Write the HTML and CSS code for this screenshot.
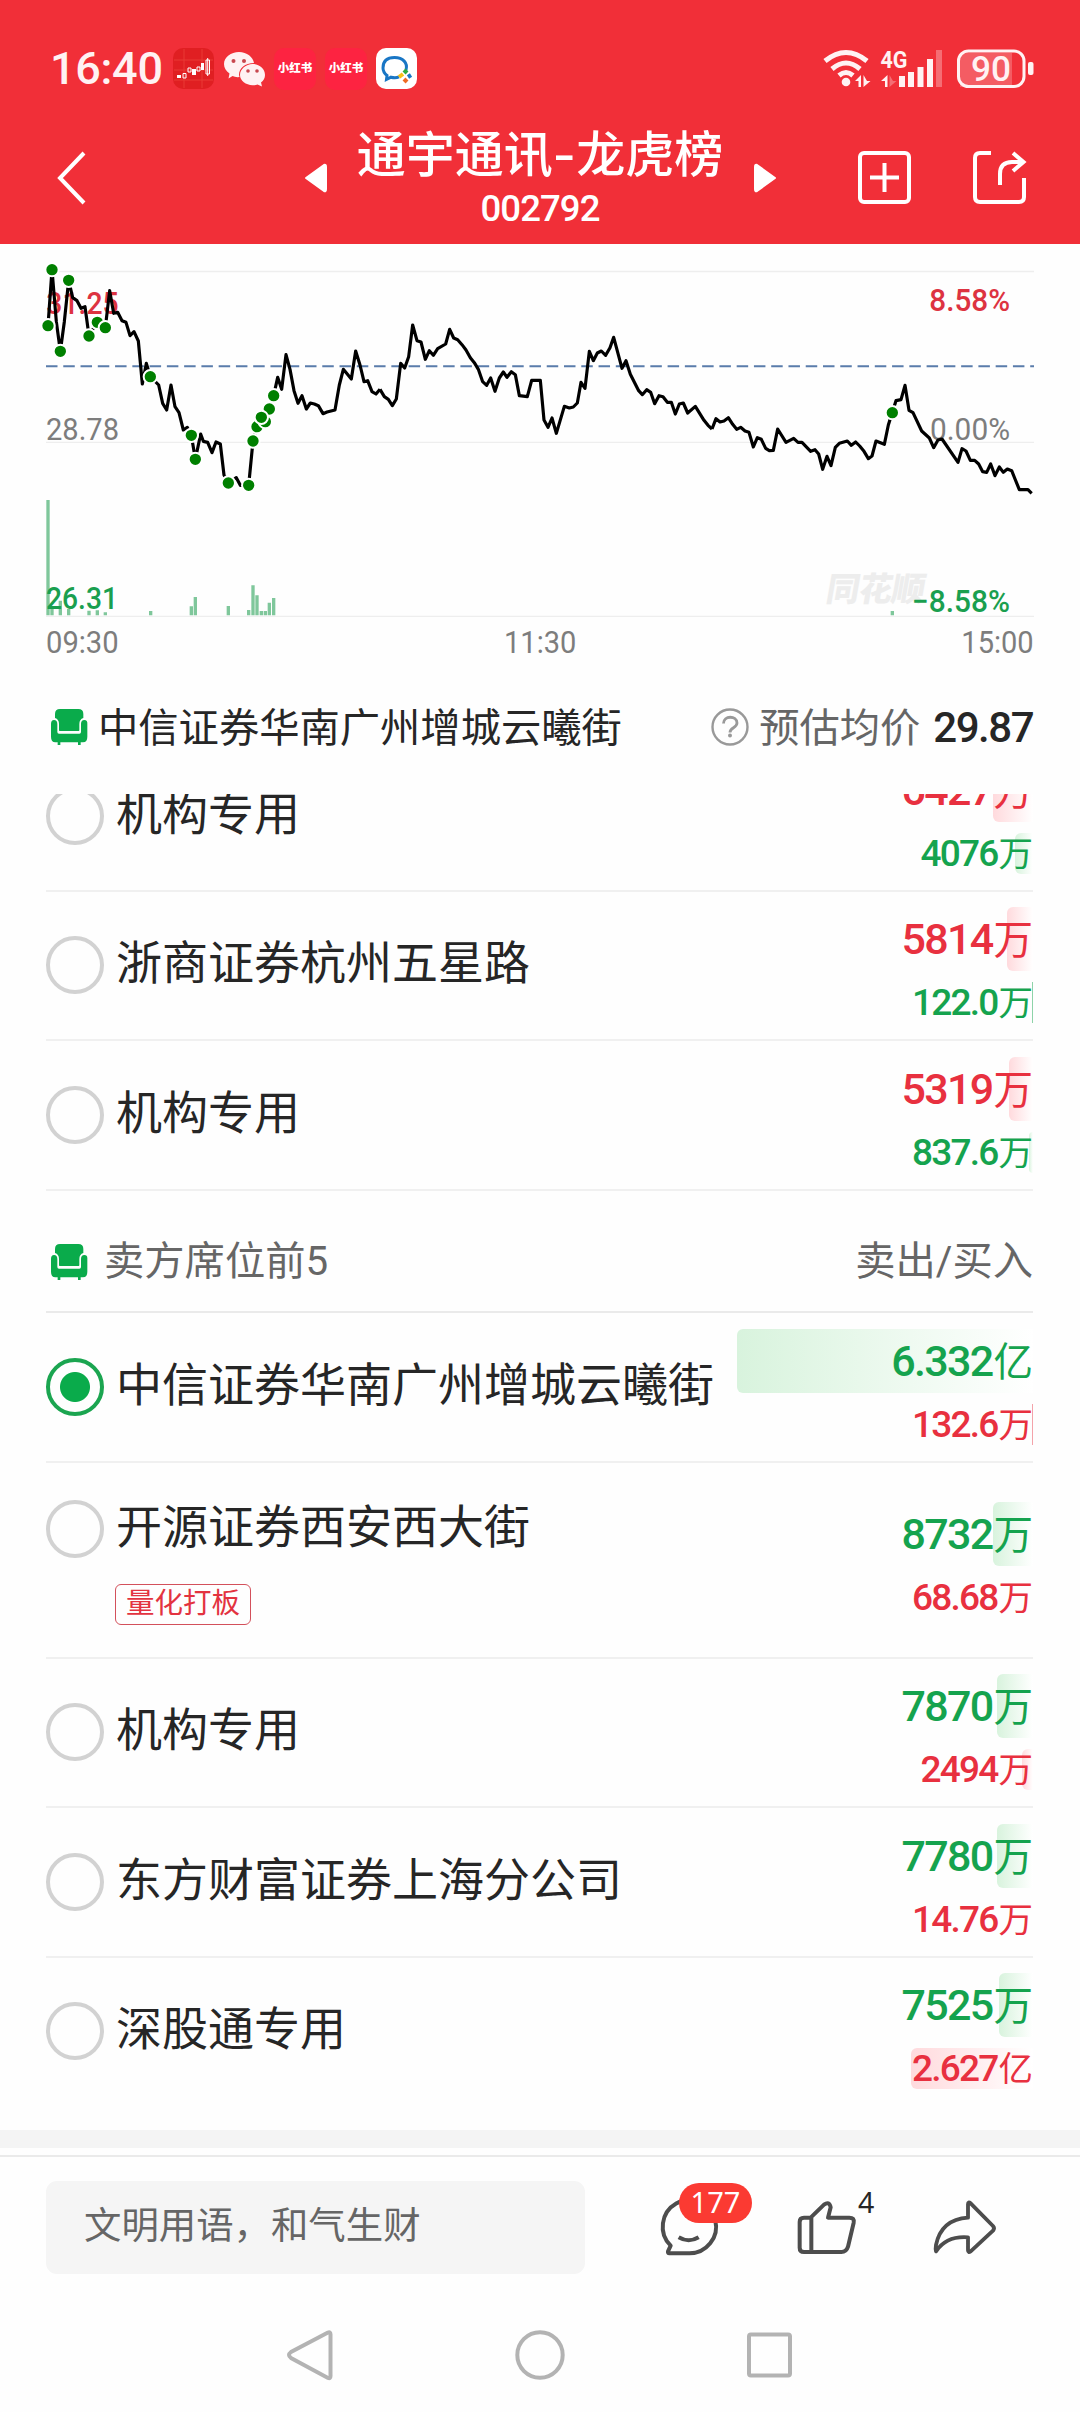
FILE: index.html
```html
<!DOCTYPE html>
<html lang="zh-CN">
<head>
<meta charset="utf-8">
<title>通宇通讯-龙虎榜</title>
<link rel="stylesheet" href="styles.css">
</head>
<body>
<svg class="defs" width="0" height="0">
  <symbol id="sofa" viewBox="60 54 114 114">
    <path fill="#0aab4b" d="M90 57h55q15 0 15 15v12q-12 4-12 18v19q0 2-2 2H89q-2 0-2-2v-19q0-14-12-18V72q0-15 15-15z"/>
    <path fill="#0aab4b" d="M72 90q10 0 10 12v24q0 5 5 5h61q5 0 5-5v-24q0-12 10-12t9 12v38q0 17-13 17h-7v8h-8v-8H91v8h-8v-8h-7q-13 0-13-17v-38q0-12 9-12z"/>
  </symbol>
</svg>

<header class="header">
  <div class="status">
    <span class="clock">16:40</span>
    <svg class="app" viewBox="0 0 41 41"><rect width="41" height="41" rx="10" fill="#e01f22"/><path d="M11 1v39M29 1v39M1 12h39M1 22h39M1 32h39" stroke="#e93a35" stroke-width="1"/><path d="M4 27h4v3H4zM19 21h4v6h-4zM28 15h3v7h-3z" fill="#fff"/><path d="M10 25.500h3v4.500h-3zM15 20h3v4h-3zM24 19h3v4h-3zM33 12h3.500v14H33zM34.700 10v18" fill="none" stroke="#fff"/></svg>
    <svg class="wechat" viewBox="0 0 41 35"><path fill="#fff2f3" d="M15 1c8 0 14 5 15 11-9 0-15 5-15 12l.5 2q-4 .5-7-1l-4 2.500 1-5C2 20 0 17 0 13 0 6 7 1 15 1z"/><path fill="#fff2f3" d="M28.500 13C35 13 41 17.500 41 24c0 3-1.500 5.500-4 7.500l1 4-4.500-2q-2 .7-5 .7C22 34 16 30 16 24s6-11 12.500-11z"/><g fill="#c8484f"><circle cx="9.500" cy="10" r="2"/><circle cx="20" cy="10" r="2"/><circle cx="24" cy="20" r="1.800"/><circle cx="33" cy="20" r="1.800"/></g></svg>
    <span class="xhs">小红书</span>
    <span class="xhs">小红书</span>
    <svg class="app wecom" viewBox="0 0 41 41"><rect width="41" height="41" rx="10" fill="#fff"/><path d="M30 22c2-7-3-12.500-11.500-12.500S7 14 7 20c0 3 1.500 5.500 4 7.500l-.5 4 4.500-2.300c3 .8 6 .6 8-.3" fill="none" stroke="#1976c5" stroke-width="3"/><path d="M28 22l3 3" stroke="#2cac3f" stroke-width="4"/><path d="M35 27l-3 2" stroke="#1976c5" stroke-width="4"/><path d="M31 34l-3-3" stroke="#ef6a22" stroke-width="4"/><path d="M23 29l4-3" stroke="#f5c018" stroke-width="4"/></svg>
    <svg class="signals" viewBox="823 48 211 40">
      <g fill="none" stroke="#fff2f3" stroke-width="5">
        <path d="M825 60q21-17 42 0M832 68q14-12 28 0M839 74.500q7-6 14 0"/>
      </g>
      <g fill="#fff2f3"><circle cx="846" cy="81" r="4.300"/><path d="M861 74v12h-2.500v-6H855zM863.500 74v12l7-6h-3.500z"/><path d="M887.500 74v12H885v-6h-4zM899 75h6v11h-6zM908 71h6v15h-6zM917.500 66h6v20h-6zM927 58h6v28h-6z"/></g>
      <path fill="#fff" fill-opacity=".3" d="M936 49h6v37h-6zM889.500 74v12l7-6h-3.500z"/>
      <text x="880.500" y="66.500" class="net" textLength="27" lengthAdjust="spacingAndGlyphs">4G</text>
      <path fill="#fff" fill-opacity=".22" d="M960 52h52v34h-52z"/>
      <rect x="958.500" y="50" width="65.500" height="35.500" rx="10" fill="none" stroke="#fff2f3" stroke-width="3"/>
      <rect x="1028" y="61" width="5.500" height="13" rx="2" fill="#fff2f3"/>
      <text x="971" y="80" class="charge" textLength="40" lengthAdjust="spacingAndGlyphs">90</text>
    </svg>
  </div>
  <nav class="navbar">
    <svg class="back" viewBox="0 0 28 54"><path d="M26 2L2 27l24 25" fill="none" stroke="#fff" stroke-width="4"/></svg>
    <svg class="tri prev" viewBox="0 0 24 30"><path d="M20 2L2 15l18 13q2 1 2-2V4q0-3-2-2z" fill="#fff" stroke="#fff" stroke-width="2" stroke-linejoin="round"/></svg>
    <div class="title"><h1>通宇通讯<span class="dash">-</span>龙虎榜</h1><p>002792</p></div>
    <svg class="tri next" viewBox="0 0 24 30"><path d="M4 2l18 13L4 28q-2 1-2-2V4q0-3 2-2z" fill="#fff" stroke="#fff" stroke-width="2" stroke-linejoin="round"/></svg>
    <svg class="tool add" viewBox="0 0 53 53"><rect x="2" y="2" width="49" height="49" rx="4" fill="none" stroke="#fff" stroke-width="4"/><path d="M12 26.500h29M26.500 12v29" stroke="#fff" stroke-width="4"/></svg>
    <svg class="tool share" viewBox="0 0 53 53"><path d="M18 2H7Q2 2 2 7v39q0 5 5 5h39q5 0 5-5V27M27 34V23Q27 11 39 11h11M40 2l10.500 9L40 20" fill="none" stroke="#fff" stroke-width="4"/></svg>
  </nav>
</header>

<svg class="chart" viewBox="0 -18 3240 1272">
  <path d="M138 64.500H3102M138 577H3102M138 1099H3102" stroke="#eee" stroke-width="4"/>
  <text x="2475" y="1053" class="watermark" transform="translate(185 0) skewX(-10)" textLength="296">同花顺</text>
  <path d="M138 348.500H3102" stroke="#5a7cab" stroke-width="6" stroke-dasharray="34.500 17.300"/>
  <path fill="none" stroke="#7fc79b" stroke-width="10" d="M144 1096V750M156 1096v-21M181 1096v-44M206 1096v-19M267 1096v-14M292 1096v-15M316 1096v-9M452 1096v-13M574 1096v-27M586 1096v-55M685 1096v-28M746 1096v-16M759 1096v-90M771 1096v-60M784 1096v-13M796 1096v-13M808 1096v-38M821 1096v-52M2677 1096v-13"/>
  <g class="axis">
    <text x="139" y="191" class="up" textLength="217" lengthAdjust="spacingAndGlyphs">31.25</text>
    <text x="138" y="569" textLength="219" lengthAdjust="spacingAndGlyphs">28.78</text>
    <text x="138" y="1076" class="down" textLength="216" lengthAdjust="spacingAndGlyphs">26.31</text>
    <text x="2788" y="182" class="up" textLength="242" lengthAdjust="spacingAndGlyphs">8.58%</text>
    <text x="2790" y="569" textLength="240" lengthAdjust="spacingAndGlyphs">0.00%</text>
    <text x="2736" y="1085" class="down" textLength="294" lengthAdjust="spacingAndGlyphs">−8.58%</text>
    <text x="138" y="1208" textLength="218" lengthAdjust="spacingAndGlyphs">09:30</text>
    <text x="1512" y="1208" textLength="217" lengthAdjust="spacingAndGlyphs">11:30</text>
    <text x="2884" y="1208" textLength="217" lengthAdjust="spacingAndGlyphs">15:00</text>
  </g>
  <g fill="none" stroke="#000" stroke-width="9.500" stroke-linejoin="round">
    <polyline transform="translate(90 0)" points="54,227 66,59 79,215 91,304 103,215 116,91 128,143 141,152 153,175 165,170 177,258 202,215 226,233 239,122 251,190 263,187 276,212 288,217 300,257 312,245 325,273 337,402 349,340 361,380 386,405 398,460 410,480 423,405 435,470 447,488 460,540 472,532 484,556 496,628 512,552 520,574 533,577 546,608 558,576 571,582 582,675 595,699 619,683 631,706 656,706 669,573 680,530 694,503 706,515 718,477 731,437 743,382 755,418 768,314 780,358 792,422 804,460 816,437 829,477 841,459 853,462 865,467 879,491 891,486 915,480 928,405 940,358 964,387 977,303 990,345 1002,395 1013,392 1026,425 1038,432 1050,418"/>
    <polyline transform="translate(1110 0)" points="30,418 43,440 55,448 67,467 79,447 92,340 104,354 116,320 128,225 141,272 153,276 166,328 178,302 190,316 203,296 227,282 239,238 251,264 263,269 276,284 288,300 301,323 313,338 325,358 338,395 350,406 362,384 375,424 388,384 400,366 411,382 424,365 436,374 448,437 472,440 485,391 511,391 522,510 534,532 546,504 559,550 583,469 598,474 610,471 622,459 633,397 645,415 658,304 670,332 682,309 694,303 707,316 720,293 731,262 756,355 768,332 781,373 806,422 817,434 830,419 842,427 854,461 867,437 879,440 892,457 904,457 916,492 928,462 940,459 953,489 976,469 1002,511 1014,526 1026,537"/>
    <polyline transform="translate(2130 0)" points="6,537 18,506 30,516 42,513 55,503 68,523 80,538 92,532 105,543 117,547 130,591 142,563 154,568 167,595 178,602 190,601 203,537 228,577 251,565 264,577 276,577 302,604 315,599 326,612 338,658 351,619 363,647 376,592 388,580 412,573 424,586 437,576 449,588 462,604 475,626 486,618 498,573 523,583 535,525 547,487 558,452 573,449 585,406 597,481 609,488 635,543 658,564 671,593 684,570 696,567 744,637 756,596 768,603 781,631 794,631 806,642 818,665 830,667 842,642 855,677 868,651 880,667 892,657 905,662 928,719 954,719 965,730"/>
  </g>
  <g class="dots">
    <circle cx="144" cy="227" r="20"/><circle cx="156" cy="59" r="20"/><circle cx="181" cy="304" r="20"/><circle cx="206" cy="91" r="20"/><circle cx="292" cy="217" r="20"/><circle cx="267" cy="258" r="20"/><circle cx="316" cy="233" r="20"/><circle cx="451" cy="380" r="20"/><circle cx="574" cy="556" r="20"/><circle cx="586" cy="628" r="20"/><circle cx="685" cy="699" r="20"/><circle cx="746" cy="706" r="20"/><circle cx="771" cy="530" r="20"/><circle cx="759" cy="573" r="20"/><circle cx="796" cy="515" r="20"/><circle cx="808" cy="477" r="20"/><circle cx="784" cy="502" r="20"/><circle cx="821" cy="437" r="20"/><circle cx="2677" cy="488" r="20"/>
  </g>
</svg>

<section class="summary">
  <svg class="sofa"><use href="#sofa"/></svg>
  <span class="seat">中信证券华南广州增城云曦街</span>
  <svg class="help" viewBox="0 0 38 38"><g fill="none" stroke="#999" stroke-width="2.400"><circle cx="19" cy="19" r="17.500"/><path d="M12.500 15.500c0-8.500 13.500-8 13.500-.5 0 5-7 4.500-7 9.500" stroke-width="2.800"/></g><circle cx="19" cy="27.500" r="2" fill="#999"/></svg>
  <span class="label">预估均价</span>
  <b class="avg">29.87</b>
</section>

<main class="list">
  <div class="row">
    <i class="radio"></i><div class="name">机构专用</div>
    <div class="vals"><div class="big red"><i class="fill" style="width:40px"></i><span>6427<em>万</em></span></div><div class="small green"><i class="fill" style="width:18px"></i><span>4076<em>万</em></span></div></div>
  </div>
  <div class="row">
    <i class="radio"></i><div class="name">浙商证券杭州五星路</div>
    <div class="vals"><div class="big red"><i class="fill" style="width:26px"></i><span>5814<em>万</em></span></div><div class="small green"><i class="fill thin"></i><span>122.0<em>万</em></span></div></div>
  </div>
  <div class="row">
    <i class="radio"></i><div class="name">机构专用</div>
    <div class="vals"><div class="big red"><i class="fill" style="width:24px"></i><span>5319<em>万</em></span></div><div class="small green"><i class="fill" style="width:4px"></i><span>837.6<em>万</em></span></div></div>
  </div>
  <div class="group">
    <svg class="sofa"><use href="#sofa"/></svg><span class="gname">卖方席位前5</span><span class="cols">卖出/买入</span>
  </div>
  <div class="row">
    <i class="radio on"></i><div class="name">中信证券华南广州增城云曦街</div>
    <div class="vals"><div class="big green"><i class="fill" style="width:296px"></i><span>6.332<em>亿</em></span></div><div class="small red"><i class="fill thin"></i><span>132.6<em>万</em></span></div></div>
  </div>
  <div class="row tagged">
    <i class="radio"></i><div class="name">开源证券西安西大街<span class="tag">量化打板</span></div>
    <div class="vals"><div class="big green"><i class="fill" style="width:40px"></i><span>8732<em>万</em></span></div><div class="small red"><span>68.68<em>万</em></span></div></div>
  </div>
  <div class="row">
    <i class="radio"></i><div class="name">机构专用</div>
    <div class="vals"><div class="big green"><i class="fill" style="width:36px"></i><span>7870<em>万</em></span></div><div class="small red"><i class="fill" style="width:11px"></i><span>2494<em>万</em></span></div></div>
  </div>
  <div class="row">
    <i class="radio"></i><div class="name">东方财富证券上海分公司</div>
    <div class="vals"><div class="big green"><i class="fill" style="width:36px"></i><span>7780<em>万</em></span></div><div class="small red"><span>14.76<em>万</em></span></div></div>
  </div>
  <div class="row last">
    <i class="radio"></i><div class="name">深股通专用</div>
    <div class="vals"><div class="big green"><i class="fill" style="width:34px"></i><span>7525<em>万</em></span></div><div class="small red"><i class="fill" style="width:122px"></i><span>2.627<em>亿</em></span></div></div>
  </div>
</main>
<div class="band"></div>

<footer class="actions">
  <div class="input">文明用语，和气生财</div>
  <div class="comment">
    <svg viewBox="180 33 180 279"><path d="M212 227A80 80 0 1 1 266 250H208q-5 0-4-6z M236 202q30 18 60 0" fill="none" stroke="#4d4d4d" stroke-width="12" stroke-linejoin="round"/></svg>
    <span class="badge">177</span>
  </div>
  <svg class="like" viewBox="585 33 189 279"><path d="M632 143l40-39q16-12 20 8l-8 31h64q16 0 13 15l-17 72q-5 16-20 16H612q-13 0-13-13v-77q0-13 13-13zM634 143v103" fill="none" stroke="#4d4d4d" stroke-width="12" stroke-linejoin="round"/></svg>
  <span class="count">4</span>
  <svg class="forward" viewBox="996 33 198 279"><path d="M1104 143v-40q0-9 8-3l67 68q6 7 0 14l-67 62q-8 5-8-3v-39q-64-5-96 42-2-7 0-19 16-77 96-82z" fill="none" stroke="#4d4d4d" stroke-width="11.500" stroke-linejoin="round"/></svg>
</footer>
<nav class="system">
  <svg viewBox="0 0 52 50"><path d="M44 2.500L7 22q-4 3 0 6l37 20q2.500 1 2.500-2V4.500q0-3-2.500-2z" fill="none" stroke="#b3b3b3" stroke-width="4"/></svg>
  <svg viewBox="0 0 52 50"><circle cx="26" cy="25" r="22.700" fill="none" stroke="#b3b3b3" stroke-width="4"/></svg>
  <svg viewBox="0 0 52 50"><rect x="5" y="4.500" width="41" height="41" rx="2" fill="none" stroke="#b3b3b3" stroke-width="4"/></svg>
</nav>
</body>
</html>
```
FILE: styles.css
```css
* { box-sizing: border-box; }
body {
  margin: 0;
  width: 1080px;
  height: 2412px;
  overflow: hidden;
  background: #fefefe;
  color: #262626;
  font-family: Roboto, "Noto Sans CJK SC", sans-serif;
}
h1, p { margin: 0; }
em, i { font-style: normal; }
svg { display: block; flex: none; overflow: visible; }
.defs { position: absolute; }

.header { height: 244px; background: #f12f38; color: #fff; }
.status { display: flex; align-items: center; height: 112px; padding: 25px 46px 0 50px; }
.clock { width: 112px; margin-right: 11px; font-size: 45px; font-weight: 500; line-height: 50px; letter-spacing: -.3px; color: #fff2f3; white-space: nowrap; }
.app { width: 41px; height: 41px; }
.wechat { width: 41px; height: 35px; margin: 0 9px 0 10px; }
.xhs {
  width: 42px; height: 42px; margin-right: 9px; border-radius: 10px;
  background: #fd2341; color: #fff; text-align: center;
  font-size: 11.500px; font-weight: 900; line-height: 41px; white-space: nowrap;
}
.signals { width: 211px; height: 40px; margin-left: auto; }
.net { font-size: 23px; font-weight: 700; fill: #fff2f3; }
.charge { font-size: 35px; font-weight: 500; fill: #fff2f3; }

.navbar { display: flex; align-items: center; height: 131px; padding-left: 58px; }
.back { width: 28px; height: 54px; }
.tri { width: 24px; height: 30px; }
.prev { margin-left: 218px; }
.title { width: 404px; margin: 0 11px 0 10px; padding-top: 4px; text-align: center; white-space: nowrap; }
.title h1 { font-size: 49px; font-weight: 500; line-height: 56px; }
.title .dash { display: inline-block; transform: scaleX(1.3); margin: 0 3.500px; }
.title p { margin-top: 3px; font-size: 36.500px; font-weight: 500; line-height: 44px; letter-spacing: -.9px; }
.tool { width: 53px; height: 53px; }
.add { margin-left: 81px; }
.share { margin-left: 62px; }

.chart { width: 1080px; height: 424px; }
.watermark { font-size: 100px; font-weight: 900; fill: #ededed; }
.axis { font-size: 93px; fill: #7d7d7d; }
.axis .up { fill: #dd3341; font-weight: 500; }
.axis .down { fill: #1a9f4f; font-weight: 500; }
.dots circle { fill: green; stroke: #fff; stroke-width: 6; }

.summary { display: flex; align-items: center; height: 118px; margin-bottom: 8px; padding: 0 47px 0 50px; font-size: 40.300px; white-space: nowrap; }
.sofa { width: 38px; height: 38px; }
.seat { margin: -6px 0 0 10px; }
.help { width: 38px; height: 38px; margin-left: auto; }
.label { margin: -6px 0 0 10px; color: #666; }
.avg { margin-left: 13px; font-size: 42px; font-weight: 500; letter-spacing: -1.500px; }

.list { height: 1336px; padding: 0 47px 0 46px; overflow: hidden; }
.row { display: flex; align-items: center; height: 149.500px; border-bottom: 2px solid #f0f0f0; }
.row:first-child { margin-top: -52px; }
.row.last { border-color: transparent; }
.radio { width: 58px; height: 58px; border: 4px solid #d2d2d2; border-radius: 50%; flex: none; }
.radio.on { border-color: #1ba550; background: radial-gradient(circle, #0aab4b 14.500px, transparent 15.500px); }
.name { flex: 1; margin-left: 12px; font-size: 46px; line-height: 60px; white-space: nowrap; margin-top: -4px; }
.vals { width: 296px; margin-left: -60px; text-align: right; white-space: nowrap; }
.big, .small { position: relative; font-weight: 500; }
.big { height: 64px; line-height: 64px; font-size: 43px; letter-spacing: -1.700px; margin-bottom: 11px; }
.small { height: 41px; line-height: 41px; font-size: 37px; letter-spacing: -1.800px; }
.vals span { position: relative; }
.vals em { letter-spacing: 0; font-size: 39.500px; font-weight: 400; margin-left: 1px; }
.small em { font-size: 34.500px; }
.red { color: #e8303f; }
.green { color: #15a34e; }
.fill { position: absolute; top: 0; right: 0; bottom: 0; border-radius: 6px 0 0 6px; }
.red .fill { background: linear-gradient(90deg, #ffdadd, #fff); }
.green .fill { background: linear-gradient(90deg, #d8f3dd, #fff); }
.fill.thin { width: 1px; border-radius: 0; }
.red .fill.thin { background: #f4a3aa; }
.green .fill.thin { background: #8dd3a8; }
.tagged { height: 196px; }
.tagged .radio { margin-bottom: 62px; }
.tagged .name { margin-top: 2px; }
.tag {
  display: block; width: 136px; height: 41px; margin: 27px 0 0 -1px;
  border: 1.500px solid #d3505b; border-radius: 6px; color: #e33340;
  font-size: 28.500px; line-height: 37px; text-align: center;
}
.group { display: flex; align-items: center; height: 122.500px; padding: 0 0 0 4px; border-bottom: 2px solid #eaeaea; color: #666; font-size: 40.300px; white-space: nowrap; }
.group .sofa { margin-top: 22px; }
.gname { margin: 13px 0 0 16px; }
.cols { margin: 13px 0 0 auto; }

.band { height: 18px; background: #f4f4f4; }
.actions { display: flex; align-items: flex-start; height: 144px; margin-top: 7px; padding: 24px 0 0 46px; border-top: 2px solid #eaeaea; }
.input { width: 539px; height: 93px; padding-left: 38px; border-radius: 11px; background: #f5f5f5; color: #666; font-size: 37.400px; line-height: 91px; }
.comment { position: relative; margin-left: 75px; }
.comment svg { width: 60px; height: 93px; }
.badge { position: absolute; left: 19px; top: 2px; width: 73px; height: 40px; border-radius: 20px; background: #fb3a32; color: #fff; text-align: center; font: 29px/37px "Noto Sans", sans-serif; }
.like { width: 63px; height: 93px; margin-left: 75px; }
.count { width: 17px; margin: 2px 57px 0 0; font: 28.500px/38px "Noto Sans", sans-serif; }
.forward { width: 66px; height: 93px; }
.system { display: flex; justify-content: center; gap: 178px; padding-top: 31px; }
.system svg { width: 52px; height: 50px; }
```
